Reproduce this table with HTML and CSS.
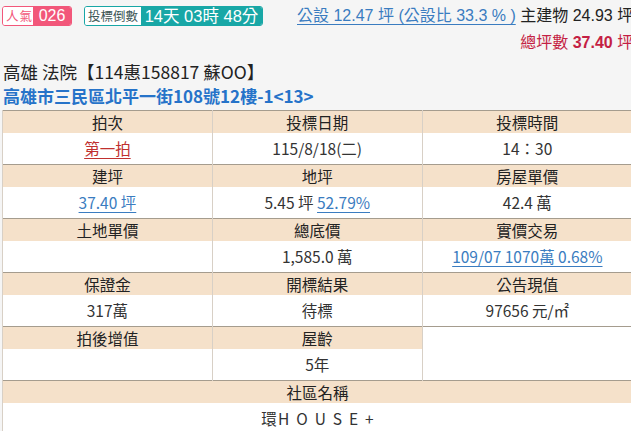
FILE: index.html
```html
<!DOCTYPE html>
<html lang="zh-Hant">
<head>
<meta charset="utf-8">
<link rel="stylesheet" href="styles.css">
</head>
<body>
<div class="page">
  <div class="top">
    <div class="badges">
      <span class="badge pop"><span class="lbl">人氣</span><span class="val">026</span></span>
      <span class="badge count"><span class="lbl">投標倒數</span><span class="val">14天 03時 48分</span></span>
    </div>
    <div class="area">
      <div class="line1"><a class="link">公設 12.47 坪 (公設比 33.3 % )</a> 主建物 24.93 坪</div>
      <div class="line2">總坪數 <b>37.40</b> 坪</div>
    </div>
  </div>
  <div class="title">高雄 法院【114惠158817 蘇OO】</div>
  <div class="addr">高雄市三民區北平一街108號12樓-1&lt;13&gt;</div>
  <table class="info">
    <tbody class="grp">
      <tr class="hd"><td>拍次</td><td>投標日期</td><td>投標時間</td></tr>
      <tr class="dt"><td><a class="red">第一拍</a></td><td>115/8/18(二)</td><td>14：30</td></tr>
    </tbody>
    <tbody class="grp">
      <tr class="hd"><td>建坪</td><td>地坪</td><td>房屋單價</td></tr>
      <tr class="dt"><td><a class="blue">37.40 坪</a></td><td>5.45 坪 <a class="blue">52.79%</a></td><td>42.4 萬</td></tr>
    </tbody>
    <tbody class="grp">
      <tr class="hd"><td>土地單價</td><td>總底價</td><td>實價交易</td></tr>
      <tr class="dt"><td></td><td>1,585.0 萬</td><td><a class="blue">109/07 1070萬 0.68%</a></td></tr>
    </tbody>
    <tbody class="grp">
      <tr class="hd"><td>保證金</td><td>開標結果</td><td>公告現值</td></tr>
      <tr class="dt"><td>317萬</td><td>待標</td><td>97656 元/㎡</td></tr>
    </tbody>
    <tbody class="grp">
      <tr class="hd"><td>拍後增值</td><td>屋齡</td><td class="blank" rowspan="2"></td></tr>
      <tr class="dt"><td></td><td>5年</td></tr>
    </tbody>
    <tbody class="grp">
      <tr class="hd"><td colspan="3">社區名稱</td></tr>
      <tr class="dt"><td colspan="3">環<span class="spaced">HOUSE+</span></td></tr>
    </tbody>
  </table>
</div>
</body>
</html>
```
FILE: styles.css
```css
html, body {
  margin: 0;
  padding: 0;
  background: #f5f5f5;
  overflow: hidden;
}
body {
  font-family: "Noto Sans CJK TC", "Noto Sans", sans-serif;
  color: #333;
}
.page {
  width: 631px;
  height: 431px;
  overflow: hidden;
}
.top {
  display: flex;
  align-items: flex-start;
  padding: 6px 0 0 2px;
  height: 50px;
  box-sizing: border-box;
  font-family: "Liberation Sans", "Noto Sans CJK TC", sans-serif;
}
.badges {
  display: flex;
  gap: 12px;
  flex: none;
}
.badge {
  display: inline-flex;
  height: 20px;
  border-radius: 3px;
  overflow: hidden;
  box-sizing: border-box;
  line-height: 18px;
  white-space: nowrap;
}
.badge .lbl {
  background: #fff;
  font-size: 12.5px;
  font-family: "Noto Sans CJK TC", sans-serif;
  line-height: 18px;
}
.badge .val {
  color: #fff;
}
.pop {
  border: 1px solid #f2577a;
  width: 70px;
}
.pop .lbl { color: #f2577a; width: 30px; box-sizing: border-box; padding-left: 3px; letter-spacing: 1px; }
.pop .val { background: #f2577a; font-size: 16px; flex: 1; text-align: center; }
.count {
  border: 1px solid #18a7a6;
  width: 179px;
}
.count .lbl { color: #3c5656; width: 56px; box-sizing: border-box; padding-left: 3px; }
.count .val { background: #18a7a6; font-size: 16.5px; flex: 1; text-align: center; }
.area {
  margin-left: 34px;
  white-space: nowrap;
  flex: none;
  font-size: 16px;
  line-height: 22px;
  margin-top: -1px;
}
.line1 { color: #222; }
.link {
  color: #3a7cc0;
  text-decoration: underline;
  text-underline-offset: 3px;
}
.line2 {
  text-align: right;
  color: #c41f44;
  margin-top: 5px;
}
.line2 b { font-weight: bold; }
.title {
  font-size: 17.5px;
  color: #222;
  line-height: 24px;
  padding-left: 3px;
  margin-top: 10px;
}
.addr {
  font-size: 17px;
  font-weight: bold;
  color: #2673c9;
  line-height: 24px;
  padding-left: 3px;
}
.info {
  margin: 2px 0 0 2px;
  width: 630px;
  border-collapse: collapse;
  table-layout: fixed;
  font-size: 15.5px;
  background: #fff;
  border-left: 1px solid #8e8678;
}
.info td {
  text-align: center;
  border-left: 1px solid #d8d0c6;
  padding: 0;
  white-space: nowrap;
}
.grp {
  border-top: 1px solid #a59c8e;
}
.hd td {
  background: #f5e1ca;
  height: 22px;
  line-height: 22px;
  color: #222;
}
.dt td {
  background: #fff;
  height: 31px;
  line-height: 31px;
  color: #333;
}
.info td.blank { background: #fff; }
.spaced { letter-spacing: 7px; margin-right: -7px; margin-left: 1px; }
.red {
  color: #c0302f;
  text-decoration: underline;
  text-underline-offset: 3px;
}
.blue {
  color: #3a7cc0;
  text-decoration: underline;
  text-underline-offset: 3px;
}
```
